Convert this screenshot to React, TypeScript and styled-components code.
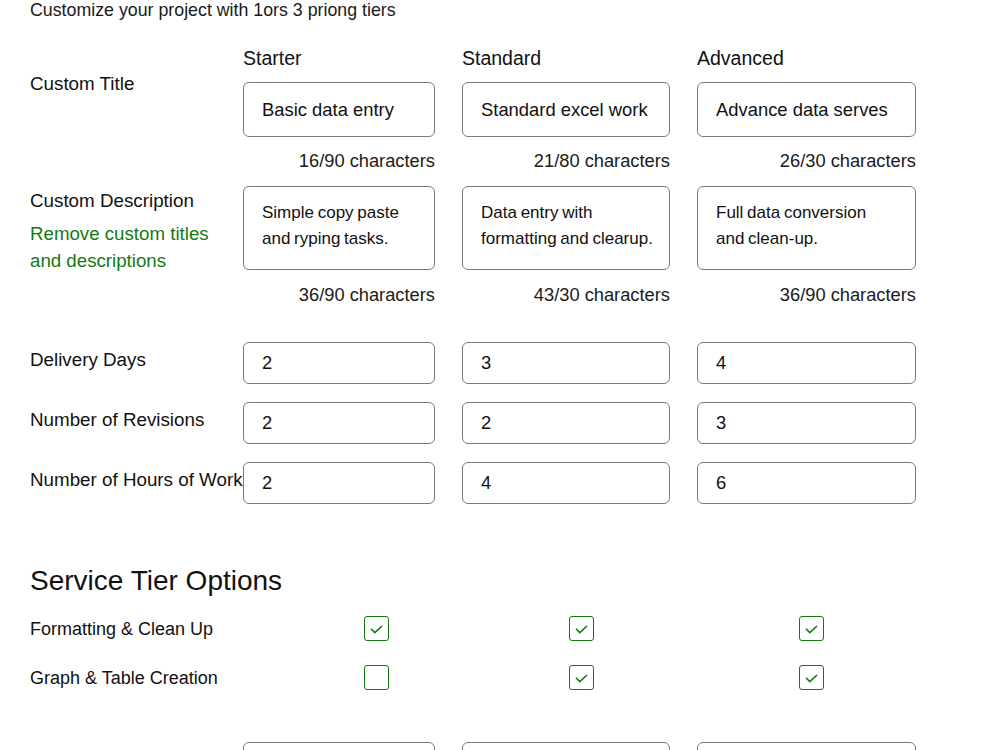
import React from 'react'
import styled, { createGlobalStyle } from 'styled-components'

const GlobalStyle = createGlobalStyle`
  body {
    margin: 0;
    background: #fff;
    color: #111;
    font-family: "Liberation Sans", Arial, sans-serif;
  }
`

const Page = styled.div`
  padding: 0 0 0 30px;
  width: 970px;
  height: 750px;
  overflow: hidden;
`

const Intro = styled.p`
  margin: 0;
  font-size: 17.8px;
  line-height: 20px;
  color: #1a1a1a;
`

const Row = styled.div<{ $top: number }>`
  display: grid;
  grid-template-columns: 186px 192px 208px 219px;
  column-gap: 27px;
  margin-top: ${p => p.$top}px;
  align-items: start;
`

const TierName = styled.div`
  font-size: 19.5px;
  line-height: 22px;
  color: #111;
`

const Label = styled.div<{ $shift?: number }>`
  font-size: 18.8px;
  line-height: 22px;
  white-space: nowrap;
  margin-top: ${p => p.$shift ?? 0}px;
  color: #111;
`

const LabelStack = styled.div`
  height: 84px;
`

const Hint = styled.div`
  margin-top: 8px;
  font-size: 18.7px;
  line-height: 27px;
  color: #137a13;
  white-space: nowrap;
`

const Field = styled.input<{ $h: number }>`
  box-sizing: border-box;
  width: 100%;
  height: ${p => p.$h}px;
  margin: 0;
  padding: 0 18px;
  border: 1px solid #7a7a7a;
  border-radius: 6px;
  background: #fff;
  font-family: inherit;
  font-size: 18.4px;
  color: #111;
  outline: none;
`

const TextArea = styled.textarea`
  box-sizing: border-box;
  display: block;
  width: 100%;
  height: 84px;
  margin: 0;
  padding: 13px 6px 0 18px;
  border: 1px solid #7a7a7a;
  border-radius: 6px;
  font-family: inherit;
  font-size: 17px;
  line-height: 26px;
  word-spacing: -1px;
  white-space: pre;
  color: #111;
  resize: none;
  overflow: hidden;
  outline: none;
`

const Count = styled.div`
  text-align: right;
  font-size: 18.3px;
  line-height: 20px;
  color: #1a1a1a;
`

const SectionTitle = styled.h2`
  margin: 61px 0 0;
  font-size: 28px;
  font-weight: 400;
  line-height: 32px;
  color: #111;
`

const OptionRow = styled.div<{ $top: number }>`
  display: grid;
  grid-template-columns: 334px 205px 230px 25px;
  align-items: center;
  margin-top: ${p => p.$top}px;
`

const OptionLabel = styled.div`
  font-size: 18px;
  line-height: 22px;
  color: #111;
`

const Check = styled.div`
  box-sizing: border-box;
  width: 25px;
  height: 25px;
  border: 1.5px solid #137a13;
  border-radius: 3px;
  display: flex;
  align-items: center;
  justify-content: center;
  padding-top: 2px;
`

const tiers = [
  {
    name: 'Starter',
    title: 'Basic data entry',
    titleCount: '16/90 characters',
    desc: 'Simple copy paste\nand ryping tasks.',
    descCount: '36/90 characters',
    days: '2',
    revisions: '2',
    hours: '2',
  },
  {
    name: 'Standard',
    title: 'Standard excel work',
    titleCount: '21/80 characters',
    desc: 'Data entry with\nformatting and clearup.',
    descCount: '43/30 characters',
    days: '3',
    revisions: '2',
    hours: '4',
  },
  {
    name: 'Advanced',
    title: 'Advance data serves',
    titleCount: '26/30 characters',
    desc: 'Full data conversion\nand clean-up.',
    descCount: '36/90 characters',
    days: '4',
    revisions: '3',
    hours: '6',
  },
]

const options = [
  { label: 'Formatting & Clean Up', on: [true, true, true] },
  { label: 'Graph & Table Creation', on: [false, true, true] },
]

const Tick = () => (
  <svg width="13" height="9" viewBox="0 0 13 9" fill="none">
    <path d="M1 3.8 L4.8 7.6 L12 1" stroke="#137a13" strokeWidth="1.6" />
  </svg>
)

const CheckBox: React.FC<{ on: boolean }> = ({ on }) => <Check>{on && <Tick />}</Check>

type NumKey = 'days' | 'revisions' | 'hours'

const numberRows: { label: string; key: NumKey; top: number }[] = [
  { label: 'Delivery Days', key: 'days', top: 37 },
  { label: 'Number of Revisions', key: 'revisions', top: 18 },
  { label: 'Number of Hours of Work', key: 'hours', top: 18 },
]

export default function App() {
  return (
    <Page>
      <GlobalStyle />
      <Intro>Customize your project with 1ors 3 priong tiers</Intro>

      <Row $top={27}>
        <div />
        {tiers.map(t => <TierName key={t.name}>{t.name}</TierName>)}
      </Row>

      <Row $top={13}>
        <Label $shift={-9}>Custom Title</Label>
        {tiers.map(t => <Field key={t.name} $h={55} readOnly defaultValue={t.title} />)}
      </Row>

      <Row $top={14}>
        <div />
        {tiers.map(t => <Count key={t.name}>{t.titleCount}</Count>)}
      </Row>

      <Row $top={15}>
        <LabelStack>
          <Label $shift={4}>Custom Description</Label>
          <Hint>Remove custom titles<br />and descriptions</Hint>
        </LabelStack>
        {tiers.map(t => <TextArea key={t.name} readOnly wrap="off" defaultValue={t.desc} />)}
      </Row>

      <Row $top={15}>
        <div />
        {tiers.map(t => <Count key={t.name}>{t.descCount}</Count>)}
      </Row>

      {numberRows.map(r => (
        <Row key={r.key} $top={r.top}>
          <Label $shift={7}>{r.label}</Label>
          {tiers.map(t => <Field key={t.name} $h={42} readOnly defaultValue={t[r.key]} />)}
        </Row>
      ))}

      <SectionTitle>Service Tier Options</SectionTitle>

      {options.map((o, i) => (
        <OptionRow key={o.label} $top={i === 0 ? 19 : 24}>
          <OptionLabel>{o.label}</OptionLabel>
          {o.on.map((on, j) => <CheckBox key={j} on={on} />)}
        </OptionRow>
      ))}

      <Row $top={52}>
        <div />
        {tiers.map(t => <Field key={t.name} $h={42} readOnly defaultValue="" />)}
      </Row>
    </Page>
  )
}
